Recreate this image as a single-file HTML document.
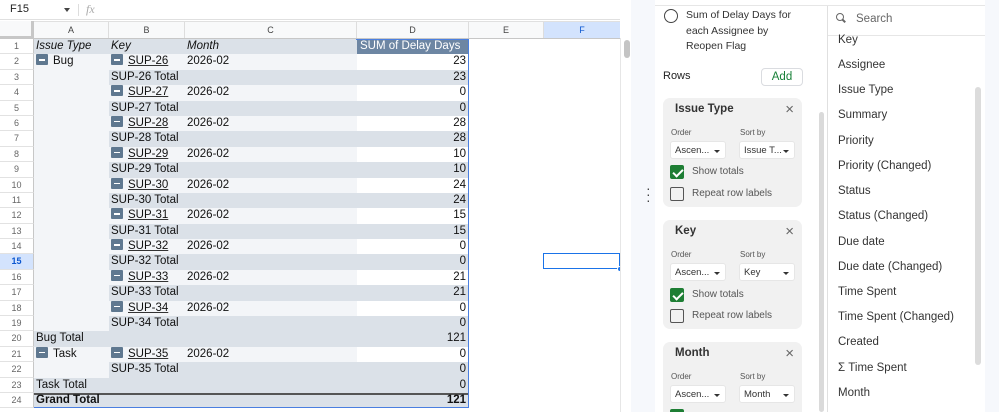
<!DOCTYPE html>
<html style="overflow:hidden;height:412px"><head><meta charset="utf-8"><style>
*{box-sizing:border-box;margin:0;padding:0}
body{width:999px;height:412px;overflow:hidden;background:#fff;font-family:"Liberation Sans",sans-serif;position:relative}
.abs{position:absolute}
.row{display:flex;height:15.4px;font-size:11.5px;color:#111;line-height:15px}
.row>div{overflow:hidden;white-space:nowrap;padding-left:2px}
.n{width:34px;background:#fff;color:#666;font-size:9px;text-align:center;padding-left:0!important;border-right:1px solid #c7c7c7;border-bottom:1px solid #e2e2e2}
.a{width:75px}.b{width:76px}.c{width:172px}.d{width:112px;text-align:right;padding-right:3px}
.lt{background:#f3f5f8}.tt{background:#dbe1e8}.wh{background:#fff}
.m{display:inline-block;width:12px;height:11px;background:#5f7890;vertical-align:-1px;margin-right:5px;position:relative;border-radius:1px}
.m:after{content:"";position:absolute;left:3px;top:5px;width:6px;height:1.5px;background:#fff}
u{text-decoration:underline;text-decoration-color:#333}
.card{position:absolute;left:663px;width:139px;background:#f1f1f1;border-radius:7px;overflow:hidden}
.ct{position:absolute;left:12px;top:5px;font-size:11.5px;font-weight:bold;color:#333}
.cx{position:absolute;right:8px;top:3px;font-size:15px;color:#666}
.lbl{position:absolute;top:30px;font-size:8px;color:#555}
.dd{position:absolute;top:43px;height:18px;background:#fff;border-radius:3px;font-size:9.5px;color:#333;padding:3px 4px;border:1px solid #e6e6e6;overflow:hidden;white-space:nowrap}
.dd:after{content:"";position:absolute;right:5px;top:8px;border:3px solid transparent;border-top:3.5px solid #333}
.cb{position:absolute;left:7px;width:14px;height:14px;border:1.5px solid #555;border-radius:2px}
.cb.on{background:#1e7e34;border-color:#1e7e34}
.cb.on:after{content:"";position:absolute;left:3.5px;top:0.5px;width:4px;height:8px;border:solid #fff;border-width:0 2px 2px 0;transform:rotate(45deg)}
.cl{position:absolute;left:29px;font-size:10px;color:#555}
.li{position:absolute;left:838px;font-size:11.5px;color:#333}
</style></head><body>
<div class="abs" style="left:0;top:0;width:620px;height:20px;border-bottom:1px solid #e0e0e0"></div>
<div class="abs" style="left:10px;top:3px;font-size:11px;color:#222">F15</div>
<div class="abs" style="left:64px;top:8px;border:3px solid transparent;border-top:4px solid #444"></div>
<div class="abs" style="left:78px;top:4px;width:1px;height:12px;background:#ddd"></div>
<div class="abs" style="left:86px;top:2px;font-size:12px;color:#aaa;font-style:italic;font-family:'Liberation Serif',serif">fx</div>
<div class="abs" style="left:0;top:21px;width:620px;height:18px;background:#f8f9fa;border-bottom:1px solid #c7c7c7;border-top:1px solid #e0e0e0"></div>
<div class="abs" style="left:0;top:21px;width:34px;height:18px;background:#f8f9fa;border-right:3px solid #c7c7c7;border-bottom:3px solid #c7c7c7"></div>
<div class="abs" style="left:34px;top:22px;display:flex;font-size:9px;color:#444;line-height:16px;text-align:center">
<div style="width:75px;border-right:1px solid #ddd">A</div><div style="width:76px;border-right:1px solid #ddd">B</div><div style="width:172px;border-right:1px solid #ddd">C</div><div style="width:112px;border-right:1px solid #ddd">D</div><div style="width:75px;border-right:1px solid #ddd">E</div><div style="width:76px;background:#d3e3fd;color:#0b57d0">F</div></div>
<div class="abs" style="left:0;top:39px">
<div class="row"><div class="n">1</div><div class="a tt"><i>Issue Type</i></div><div class="b tt"><i>Key</i></div><div class="c tt"><i>Month</i></div><div class="d" style="background:#6d86a3;color:#fff;text-align:left;padding-left:3px">SUM of Delay Days</div></div>
<div class="row"><div class="n">2</div><div class="a lt"><span class="m"></span>Bug</div><div class="b lt"><span class="m"></span><u>SUP-26</u></div><div class="c lt">2026-02</div><div class="d wh">23</div></div>
<div class="row"><div class="n">3</div><div class="a lt"></div><div class="b tt">SUP-26 Total</div><div class="c tt"></div><div class="d tt">23</div></div>
<div class="row"><div class="n">4</div><div class="a lt"></div><div class="b lt"><span class="m"></span><u>SUP-27</u></div><div class="c lt">2026-02</div><div class="d wh">0</div></div>
<div class="row"><div class="n">5</div><div class="a lt"></div><div class="b tt">SUP-27 Total</div><div class="c tt"></div><div class="d tt">0</div></div>
<div class="row"><div class="n">6</div><div class="a lt"></div><div class="b lt"><span class="m"></span><u>SUP-28</u></div><div class="c lt">2026-02</div><div class="d wh">28</div></div>
<div class="row"><div class="n">7</div><div class="a lt"></div><div class="b tt">SUP-28 Total</div><div class="c tt"></div><div class="d tt">28</div></div>
<div class="row"><div class="n">8</div><div class="a lt"></div><div class="b lt"><span class="m"></span><u>SUP-29</u></div><div class="c lt">2026-02</div><div class="d wh">10</div></div>
<div class="row"><div class="n">9</div><div class="a lt"></div><div class="b tt">SUP-29 Total</div><div class="c tt"></div><div class="d tt">10</div></div>
<div class="row"><div class="n">10</div><div class="a lt"></div><div class="b lt"><span class="m"></span><u>SUP-30</u></div><div class="c lt">2026-02</div><div class="d wh">24</div></div>
<div class="row"><div class="n">11</div><div class="a lt"></div><div class="b tt">SUP-30 Total</div><div class="c tt"></div><div class="d tt">24</div></div>
<div class="row"><div class="n">12</div><div class="a lt"></div><div class="b lt"><span class="m"></span><u>SUP-31</u></div><div class="c lt">2026-02</div><div class="d wh">15</div></div>
<div class="row"><div class="n">13</div><div class="a lt"></div><div class="b tt">SUP-31 Total</div><div class="c tt"></div><div class="d tt">15</div></div>
<div class="row"><div class="n">14</div><div class="a lt"></div><div class="b lt"><span class="m"></span><u>SUP-32</u></div><div class="c lt">2026-02</div><div class="d wh">0</div></div>
<div class="row"><div class="n" style="background:#d3e3fd;color:#0b57d0;font-weight:bold">15</div><div class="a lt"></div><div class="b tt">SUP-32 Total</div><div class="c tt"></div><div class="d tt">0</div></div>
<div class="row"><div class="n">16</div><div class="a lt"></div><div class="b lt"><span class="m"></span><u>SUP-33</u></div><div class="c lt">2026-02</div><div class="d wh">21</div></div>
<div class="row"><div class="n">17</div><div class="a lt"></div><div class="b tt">SUP-33 Total</div><div class="c tt"></div><div class="d tt">21</div></div>
<div class="row"><div class="n">18</div><div class="a lt"></div><div class="b lt"><span class="m"></span><u>SUP-34</u></div><div class="c lt">2026-02</div><div class="d wh">0</div></div>
<div class="row"><div class="n">19</div><div class="a lt"></div><div class="b tt">SUP-34 Total</div><div class="c tt"></div><div class="d tt">0</div></div>
<div class="row"><div class="n">20</div><div class="a tt">Bug Total</div><div class="b tt"></div><div class="c tt"></div><div class="d tt">121</div></div>
<div class="row"><div class="n">21</div><div class="a lt"><span class="m"></span>Task</div><div class="b lt"><span class="m"></span><u>SUP-35</u></div><div class="c lt">2026-02</div><div class="d wh">0</div></div>
<div class="row"><div class="n">22</div><div class="a lt"></div><div class="b tt">SUP-35 Total</div><div class="c tt"></div><div class="d tt">0</div></div>
<div class="row"><div class="n">23</div><div class="a tt">Task Total</div><div class="b tt"></div><div class="c tt"></div><div class="d tt">0</div></div>
<div class="row" style="font-weight:bold"><div class="n" style="font-weight:normal">24</div><div class="a tt" style="box-shadow:inset 0 2px 0 #555">Grand Total</div><div class="b tt" style="box-shadow:inset 0 2px 0 #555"></div><div class="c tt" style="box-shadow:inset 0 2px 0 #555"></div><div class="d tt" style="box-shadow:inset 0 2px 0 #555">121</div></div>
</div>
<div class="abs" style="left:356px;top:39px;width:113px;height:369px;border:1px solid #4a7fe0;border-left:none"></div>
<div class="abs" style="left:34px;top:407px;width:435px;height:1px;background:#4a7fe0"></div>
<div class="abs" style="left:543px;top:253px;width:77px;height:16px;border:1.5px solid #1a73e8"></div>
<div class="abs" style="left:617px;top:266px;width:6px;height:6px;border-radius:50%;background:#1a73e8;border:1px solid #fff"></div>
<div class="abs" style="left:620px;top:38px;width:10px;height:374px;background:#fff;border-left:1px solid #e6e6e6"></div>
<div class="abs" style="left:624px;top:40px;width:6px;height:18px;border-radius:3px;background:#c4c4c4"></div>
<div class="abs" style="left:631px;top:0;width:24px;height:412px;background:#f6f8fc"></div>
<div class="abs" style="left:646px;top:185px;font-size:14px;color:#444;line-height:6px">·<br>·<br>·</div>
<div class="abs" style="left:655px;top:0;width:172px;height:412px;background:#fff"></div>
<div class="abs" style="left:655px;top:5px;width:330px;height:1px;background:#e6e6e6"></div>
<div class="abs" style="left:664px;top:9px;width:14px;height:14px;border:1.8px solid #444;border-radius:50%"></div>
<div class="abs" style="left:686px;top:8px;font-size:10.5px;color:#333;line-height:15.5px">Sum of Delay Days for<br>each Assignee by<br>Reopen Flag</div>
<div class="abs" style="left:663px;top:70px;font-size:11px;color:#222">Rows</div>
<div class="abs" style="left:761px;top:68px;width:42px;height:18px;border:1px solid #dadce0;border-radius:4px;color:#188038;font-size:11.5px;text-align:center;line-height:16px">Add</div>
<div class="abs" style="left:819px;top:112px;width:5px;height:300px;border-radius:3px;background:#dadada"></div>
<div class="card" style="top:98px;height:109px"><div class="ct">Issue Type</div><div class="cx">×</div><div class="lbl" style="left:8px">Order</div><div class="lbl" style="left:77px">Sort by</div><div class="dd" style="left:7px;width:56px">Ascen...</div><div class="dd" style="left:76px;width:56px">Issue T...</div><div class="cb on" style="top:67px"></div><div class="cl" style="top:68px">Show totals</div><div class="cb" style="top:89px"></div><div class="cl" style="top:90px">Repeat row labels</div></div>
<div class="card" style="top:220px;height:109px"><div class="ct">Key</div><div class="cx">×</div><div class="lbl" style="left:8px">Order</div><div class="lbl" style="left:77px">Sort by</div><div class="dd" style="left:7px;width:56px">Ascen...</div><div class="dd" style="left:76px;width:56px">Key</div><div class="cb on" style="top:68px"></div><div class="cl" style="top:69px">Show totals</div><div class="cb" style="top:89px"></div><div class="cl" style="top:90px">Repeat row labels</div></div>
<div class="card" style="top:342px;height:70px;border-radius:7px 7px 0 0"><div class="ct">Month</div><div class="cx">×</div><div class="lbl" style="left:8px">Order</div><div class="lbl" style="left:77px">Sort by</div><div class="dd" style="left:7px;width:56px">Ascen...</div><div class="dd" style="left:76px;width:56px">Month</div><div class="cb on" style="top:67px"></div></div>
<div class="abs" style="left:827px;top:6px;width:1px;height:406px;background:#e0e0e0"></div>
<div class="abs" style="left:828px;top:35px;width:157px;height:1px;background:#e6e6e6"></div>
<div class="abs" style="left:836px;top:13px;width:8px;height:8px;border:1.5px solid #666;border-radius:50%"></div>
<div class="abs" style="left:842px;top:20px;width:4px;height:1.5px;background:#666;transform:rotate(45deg)"></div>
<div class="abs" style="left:856px;top:13px;font-size:11.5px;color:#666">Search</div>
<div class="abs" style="left:975px;top:87px;width:6px;height:278px;border-radius:3px;background:#dcdcdc"></div>
<div class="abs" style="left:985px;top:0;width:14px;height:412px;background:#f6f8fc"></div>
<div class="li" style="top:34px">Key</div>
<div class="li" style="top:59px">Assignee</div>
<div class="li" style="top:84px">Issue Type</div>
<div class="li" style="top:109px">Summary</div>
<div class="li" style="top:135px">Priority</div>
<div class="li" style="top:160px">Priority (Changed)</div>
<div class="li" style="top:185px">Status</div>
<div class="li" style="top:210px">Status (Changed)</div>
<div class="li" style="top:236px">Due date</div>
<div class="li" style="top:261px">Due date (Changed)</div>
<div class="li" style="top:286px">Time Spent</div>
<div class="li" style="top:311px">Time Spent (Changed)</div>
<div class="li" style="top:336px">Created</div>
<div class="li" style="top:362px">Σ Time Spent</div>
<div class="li" style="top:387px">Month</div>
</body></html>
